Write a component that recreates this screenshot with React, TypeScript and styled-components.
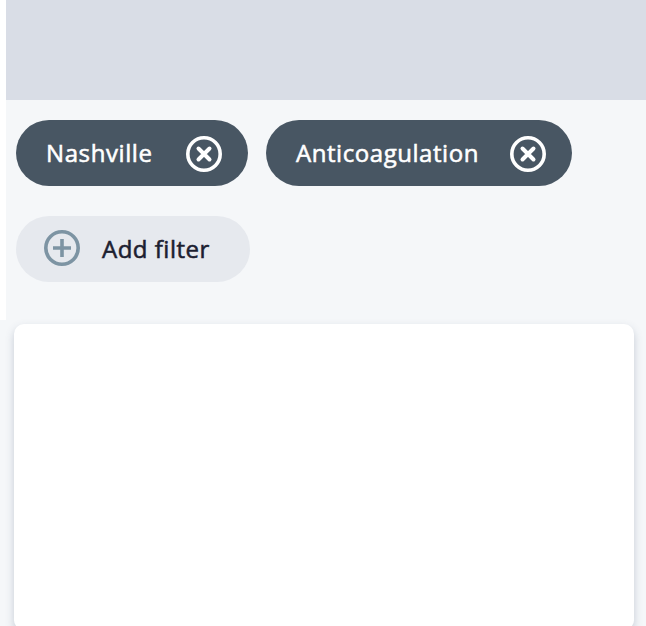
import React from "react";
import styled, { createGlobalStyle } from "styled-components";

const GlobalStyle = createGlobalStyle`
  *, *::before, *::after { box-sizing: border-box; }
  body {
    margin: 0;
    background: #f5f7f9;
    font-family: "Open Sans", "Noto Sans", sans-serif;
    overflow: hidden;
  }
`;

const Page = styled.div`
  height: 626px;
  overflow: hidden;
  background: #f5f7f9;
`;

const Top = styled.div`
  height: 320px;
  border-left: 6px solid #ffffff;
`;

const Header = styled.header`
  height: 100px;
  background: #d9dde6;
`;

const Filters = styled.div`
  display: flex;
  flex-wrap: wrap;
  align-items: flex-start;
  gap: 30px 18px;
  padding: 20px 10px 0;
`;

const Chip = styled.button<{ $width: number; $add?: boolean }>`
  display: flex;
  align-items: center;
  justify-content: ${(p) => (p.$add ? "flex-start" : "space-between")};
  gap: 22px;
  width: ${(p) => p.$width}px;
  height: 66px;
  padding: ${(p) => (p.$add ? "0 28px" : "0 26px 0 30px")};
  border: 0;
  border-radius: 33px;
  background: ${(p) => (p.$add ? "#e6e9ee" : "#485663")};
  color: ${(p) => (p.$add ? "#1c2030" : "#ffffff")};
  font: inherit;
`;

const Label = styled.span<{ $spacing: number }>`
  font-size: 24px;
  font-weight: 400;
  -webkit-text-stroke: 0.55px currentColor;
  line-height: 34px;
  letter-spacing: ${(p) => p.$spacing}px;
  white-space: nowrap;
`;

const Icon = styled.svg<{ $shift: number }>`
  flex: none;
  width: 36px;
  height: 36px;
  margin-top: ${(p) => p.$shift}px;
  fill: none;
  stroke: currentColor;
`;

const AddIcon = styled(Icon)`
  color: #7d94a3;
`;

const Card = styled.main`
  height: 306px;
  margin: 4px 12px 0 14px;
  border-radius: 10px;
  background: #ffffff;
  box-shadow: 0 4px 8px rgba(60, 80, 115, 0.26);
`;

const filters = [
  { name: "Nashville", width: 232, spacing: 0.6 },
  { name: "Anticoagulation", width: 306, spacing: 0.55 },
];

export default function App() {
  return (
    <>
      <GlobalStyle />
      <Page>
        <Top>
          <Header />
          <Filters>
            {filters.map((f) => (
              <Chip key={f.name} $width={f.width}>
                <Label $spacing={f.spacing}>{f.name}</Label>
                <Icon $shift={2} viewBox="0 0 36 36" aria-hidden="true">
                  <circle cx="18" cy="18" r="16.2" strokeWidth="3.6" />
                  <path d="M12.5 12.5l11 11M23.5 12.5l-11 11" strokeWidth="4" strokeLinecap="round" />
                </Icon>
              </Chip>
            ))}
            <Chip $width={234} $add>
              <AddIcon $shift={-2} viewBox="0 0 36 36" aria-hidden="true">
                <circle cx="18" cy="18" r="16.2" strokeWidth="3.6" />
                <path d="M18 9v18M9 18h18" strokeWidth="3.6" />
              </AddIcon>
              <Label $spacing={0.5}>Add filter</Label>
            </Chip>
          </Filters>
        </Top>
        <Card />
      </Page>
    </>
  );
}
